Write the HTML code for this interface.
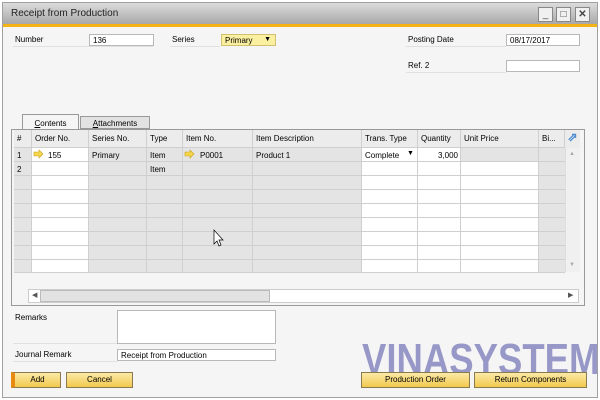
<!DOCTYPE html>
<html><head><style>
*{margin:0;padding:0;box-sizing:border-box}
body{width:600px;height:400px;background:#fff;font-family:"Liberation Sans",sans-serif;font-size:8px;color:#000;position:relative;overflow:hidden}
.a{position:absolute}
.win{left:2px;top:2px;width:596px;height:396px;border:1px solid #a0a0a0;background:#f5f5f5}
.title{left:3px;top:3px;width:594px;height:21px;background:linear-gradient(#dcdcdc,#a8a8a8);font-size:10px;padding:5px 8px;color:#222}
.orange{left:3px;top:24px;width:594px;height:3px;background:#f3b216}
.tb{top:7px;width:15px;height:15px;background:#f0f0f0;border:1px solid #888;font-size:10px;text-align:center;line-height:13px;color:#444}
.lbl{border-bottom:1px solid #e0e0e0}
.fld{background:#fff;border:1px solid #b8b8b8;height:12px;padding:1px 3px;font-size:8px}
.btn{top:372px;height:16px;border:1px solid #8a7a50;background:linear-gradient(#fbe9a6,#f2c94e);text-align:center;font-size:8px;line-height:14px}
.grid{left:11px;top:129px;width:574px;height:177px;border:1px solid #999;background:#f5f5f5}
.c{position:absolute;border-right:1px solid #cfcfcf;border-bottom:1px solid #cfcfcf;padding:2px 3px;white-space:nowrap;overflow:hidden}
.h{background:#ececec;top:130px;height:18px;padding-top:4px}
</style></head><body>
<div class="a win"></div>
<div class="a title">Receipt from Production</div>
<div class="a orange"></div>
<div class="a tb" style="left:538px">_</div>
<div class="a tb" style="left:556px">□</div>
<div class="a tb" style="left:575px;font-weight:bold">✕</div>

<div class="a lbl" style="left:13px;top:35px;width:140px;height:12px;padding-left:2px">Number</div>
<div class="a fld" style="left:89px;top:34px;width:65px">136</div>
<div class="a lbl" style="left:170px;top:35px;width:50px;height:12px;padding-left:2px">Series</div>
<div class="a fld" style="left:221px;top:34px;width:55px;background:#fbf0a0;border-color:#d0c070">Primary<span style="position:absolute;right:4px;top:1px;font-size:7px">▼</span></div>
<div class="a lbl" style="left:406px;top:35px;width:100px;height:12px;padding-left:2px">Posting Date</div>
<div class="a fld" style="left:506px;top:34px;width:74px">08/17/2017</div>
<div class="a lbl" style="left:406px;top:61px;width:100px;height:12px;padding-left:2px">Ref. 2</div>
<div class="a fld" style="left:506px;top:60px;width:74px"></div>

<div class="a" style="left:22px;top:114px;width:57px;height:16px;background:#f5f5f5;border:1px solid #999;border-bottom:none;text-align:center;padding-top:4px"><u>C</u>ontents</div>
<div class="a" style="left:80px;top:116px;width:70px;height:13px;background:#e2e2e2;border:1px solid #999;text-align:center;padding-top:2px"><u>A</u>ttachments</div>

<div class="a grid"></div>
<div class="a" style="left:14px;top:148px;width:551px;height:124px;background:#e4e4e4"></div>
<div class="a" style="left:32px;top:148px;width:57px;height:124px;background:#fff"></div>
<div class="a" style="left:362px;top:148px;width:99px;height:124px;background:#fff"></div>
<div class="a" style="left:461px;top:162px;width:78px;height:110px;background:#fff"></div>

<div class="a c h" style="left:14px;width:18px">#</div>
<div class="a c h" style="left:32px;width:57px">Order No.</div>
<div class="a c h" style="left:89px;width:58px">Series No.</div>
<div class="a c h" style="left:147px;width:36px">Type</div>
<div class="a c h" style="left:183px;width:70px">Item No.</div>
<div class="a c h" style="left:253px;width:109px">Item Description</div>
<div class="a c h" style="left:362px;width:56px">Trans. Type</div>
<div class="a c h" style="left:418px;width:43px">Quantity</div>
<div class="a c h" style="left:461px;width:78px">Unit Price</div>
<div class="a c h" style="left:539px;width:26px">Bi...</div>
<div class="a" style="left:565px;top:130px;width:15px;height:18px;background:#ececec;color:#4a8ad0;font-size:12px;text-align:center;font-weight:bold">⇗</div>

<svg class="a" style="left:14px;top:148px" width="551" height="126">
<g stroke="#cfcfcf" stroke-width="1">
<line x1="0" y1="13.5" x2="551" y2="13.5"/><line x1="0" y1="27.5" x2="551" y2="27.5"/><line x1="0" y1="41.5" x2="551" y2="41.5"/><line x1="0" y1="55.5" x2="551" y2="55.5"/><line x1="0" y1="69.5" x2="551" y2="69.5"/><line x1="0" y1="83.5" x2="551" y2="83.5"/><line x1="0" y1="97.5" x2="551" y2="97.5"/><line x1="0" y1="111.5" x2="551" y2="111.5"/><line x1="0" y1="124.5" x2="551" y2="124.5"/>
<line x1="17.5" y1="0" x2="17.5" y2="125"/><line x1="74.5" y1="0" x2="74.5" y2="125"/><line x1="132.5" y1="0" x2="132.5" y2="125"/><line x1="168.5" y1="0" x2="168.5" y2="125"/><line x1="238.5" y1="0" x2="238.5" y2="125"/><line x1="347.5" y1="0" x2="347.5" y2="125"/><line x1="403.5" y1="0" x2="403.5" y2="125"/><line x1="446.5" y1="0" x2="446.5" y2="125"/><line x1="524.5" y1="0" x2="524.5" y2="125"/>
</g>
<path d="M20 4h5v-2l4 4-4 4v-2h-5z" fill="#f5d54a" stroke="#c9a020" stroke-width="0.6"/>
<path d="M171 4h5v-2l4 4-4 4v-2h-5z" fill="#f5d54a" stroke="#c9a020" stroke-width="0.6"/>
<path d="M200 82v14l3-3 2 5 2-1-2-5h4z" fill="#fff" stroke="#000" stroke-width="0.7"/>
</svg>
<div class="a" style="left:17px;top:151px">1</div>
<div class="a" style="left:17px;top:165px">2</div>
<div class="a" style="left:48px;top:151px">155</div>
<div class="a" style="left:92px;top:151px">Primary</div>
<div class="a" style="left:150px;top:151px">Item</div>
<div class="a" style="left:150px;top:165px">Item</div>
<div class="a" style="left:200px;top:151px">P0001</div>
<div class="a" style="left:256px;top:151px">Product 1</div>
<div class="a" style="left:365px;top:151px">Complete</div>
<div class="a" style="left:407px;top:150px;font-size:7px">▼</div>
<div class="a" style="left:430px;top:151px;width:28px;text-align:right">3,000</div>
<div class="a" style="left:565px;top:148px;width:15px;height:124px;background:#f0f0f0;border-left:1px solid #ddd"></div>
<div class="a" style="left:569px;top:151px;font-size:6px;color:#aaa">▲</div>
<div class="a" style="left:569px;top:262px;font-size:6px;color:#aaa">▼</div>
<div class="a" style="left:28px;top:289px;width:551px;height:14px;background:#fff;border:1px solid #ccc"></div>
<div class="a" style="left:40px;top:290px;width:230px;height:12px;background:#e2e2e2;border:1px solid #bbb"></div>
<div class="a" style="left:32px;top:291px;font-size:7px;color:#555">◀</div>
<div class="a" style="left:568px;top:291px;font-size:7px;color:#555">▶</div>

<div class="a lbl" style="left:13px;top:313px;width:104px;height:31px;padding-left:2px">Remarks</div>
<div class="a fld" style="left:117px;top:310px;width:159px;height:34px"></div>
<div class="a lbl" style="left:13px;top:350px;width:104px;height:12px;padding-left:2px">Journal Remark</div>
<div class="a fld" style="left:117px;top:349px;width:159px">Receipt from Production</div>

<div class="a" style="left:362px;top:336px;font-size:44px;font-weight:bold;color:rgba(90,90,170,0.6);line-height:48px;transform:scaleX(0.83);transform-origin:left;white-space:nowrap">VINASYSTEM</div>

<div class="a btn" style="left:11px;width:50px;border-left:4px solid #e88a10">Add</div>
<div class="a btn" style="left:66px;width:67px">Cancel</div>
<div class="a btn" style="left:361px;width:109px">Production Order</div>
<div class="a btn" style="left:474px;width:113px">Return Components</div>
</body></html>
